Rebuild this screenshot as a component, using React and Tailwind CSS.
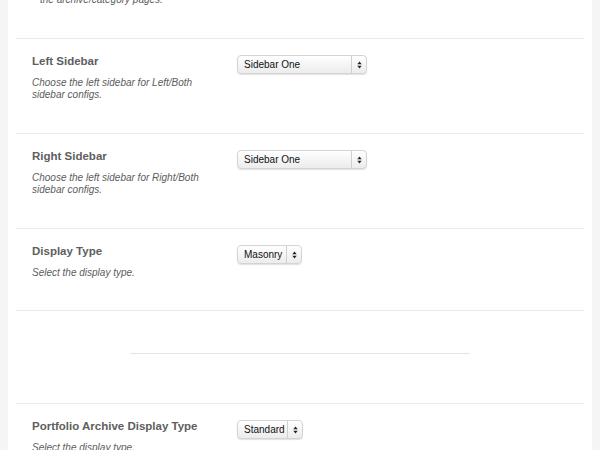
import React from "react";

function Select({ label, w }) {
  return (
    <div
      className={`flex items-stretch h-[19px] rounded-[4px] border border-[#d4d4d4] bg-gradient-to-b from-[#ffffff] to-[#ececec] shadow-[0_1px_1px_rgba(0,0,0,0.12)] ${w}`}
    >
      <div className="flex-1 flex items-center pl-[6px] text-[10px] text-[#111] leading-none">{label}</div>
      <div className="w-[15px] border-l border-[#d0d0d0] flex flex-col items-center justify-center">
        <svg width="5" height="8" viewBox="0 0 5 8">
          <path d="M2.5 0.5 L4.7 3.2 L0.3 3.2 Z" fill="#222" />
          <path d="M2.5 7.5 L4.7 4.8 L0.3 4.8 Z" fill="#222" />
        </svg>
      </div>
    </div>
  );
}

function Section({ title, desc, select, selectW, pb = "pb-[32px]" }) {
  return (
    <div className="shrink-0 border-t border-[#e9e9e9] mx-[8px] flex pl-[16px] pt-[15px]">
      <div className={`w-[205px] ${pb}`}>
        <div className="text-[11.5px] font-bold text-[#5e5e5e] leading-[14px]">{title}</div>
        <div className="mt-[9px] text-[10px] italic text-[#5c5c5c] leading-[12px] w-[190px]">
          {desc.map((d, i) => (
            <div key={i}>{d}</div>
          ))}
        </div>
      </div>
      <div className="pt-[1px]">
        <Select label={select} w={selectW} />
      </div>
    </div>
  );
}

export default function App() {
  return (
    <div
      className="w-[600px] h-[450px] overflow-hidden bg-[#f5f5f5] flex justify-center"
      style={{ fontFamily: '"Liberation Sans", Arial, sans-serif' }}
    >
      <div className="w-[584px] h-full bg-white flex flex-col">
        <div className="shrink-0 h-[38px] pl-[32px] flex flex-col">
          <div className="-mt-[6px] text-[10px] italic text-[#5c5c5c] leading-[12px]">
            the archive/category pages.
          </div>
        </div>
        <Section
          title="Left Sidebar"
          desc={["Choose the left sidebar for Left/Both", "sidebar configs."]}
          select="Sidebar One"
          selectW="w-[130px]"
        />
        <Section
          title="Right Sidebar"
          desc={["Choose the left sidebar for Right/Both", "sidebar configs."]}
          select="Sidebar One"
          selectW="w-[130px]"
        />
        <Section
          title="Display Type"
          desc={["Select the display type."]}
          select="Masonry"
          selectW="w-[65px]"
          pb="pb-[31px]"
        />
        <div className="shrink-0 border-t border-[#e9e9e9] mx-[8px] h-[93px] pt-[42px] flex justify-center">
          <div className="w-[340px] h-[1px] bg-[#e4e4e4]"></div>
        </div>
        <Section
          title="Portfolio Archive Display Type"
          desc={["Select the display type."]}
          select="Standard"
          selectW="w-[66px]"
        />
      </div>
    </div>
  );
}
